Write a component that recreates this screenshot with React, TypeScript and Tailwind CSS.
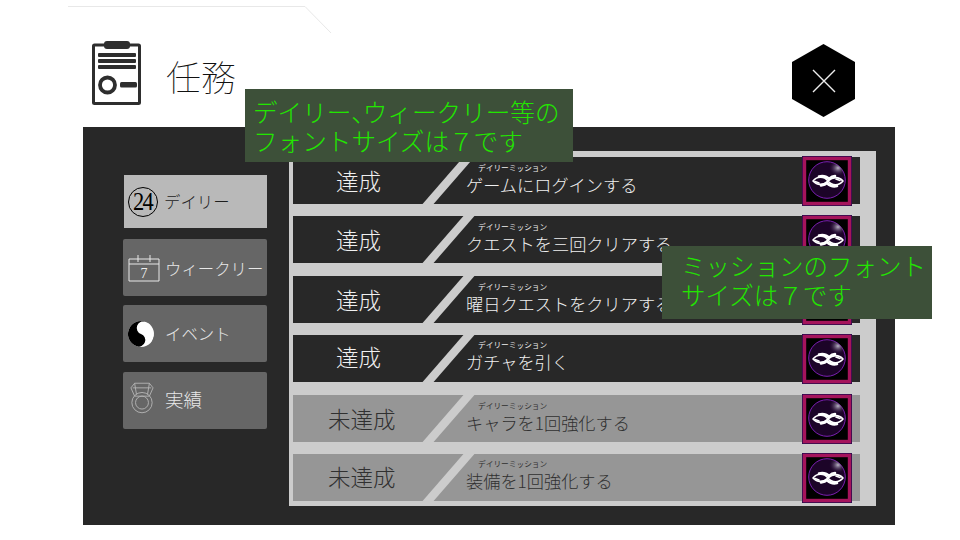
const F = "font-['Noto_Sans_CJK_JP','Noto_Sans_CJK_SC',sans-serif] font-light";

function Gem() {
  return (
    <svg viewBox="0 0 50 50" className="h-[50px] w-[50px] shrink-0">
      <defs>
        <radialGradient id="gemHi" cx="0.5" cy="0.5" r="0.5">
          <stop offset="0" stopColor="#b9b4c4" />
          <stop offset="1" stopColor="#2a0a3c" stopOpacity="0" />
        </radialGradient>
        <clipPath id="gemClip">
          <circle cx="25" cy="24" r="18.3" />
        </clipPath>
      </defs>
      <rect x="0" y="0" width="50" height="50" fill="#2d0a4e" />
      <rect x="2.5" y="2.5" width="45" height="45" fill="#000" stroke="#a5145c" strokeWidth="3.4" />
      <circle cx="25" cy="24" r="18.3" fill="#1c0428" stroke="#7a1fb0" strokeWidth="1" />
      <g clipPath="url(#gemClip)">
        <ellipse cx="36" cy="12" rx="9" ry="8" fill="url(#gemHi)" />
      </g>
      <g fill="none" stroke="#fff" strokeLinecap="round" strokeLinejoin="round">
        <path d="M26 25C22 20 15 20 11 25C15 29.5 21 29.5 26 25C31 20.5 37 20.5 41 25C37 30 30 30 26 25" strokeWidth="1.6" />
        <path d="M17 20.5C21 19.5 24 20 27 23C29 21 31 20 33 20" strokeWidth="2.6" />
        <path d="M19 29.5C22 29 24 28 25 27C28 30 31 31 35 30" strokeWidth="2.6" />
        <path d="M13 25.5L17 27M38 24.5L34 23" strokeWidth="1.6" />
      </g>
    </svg>
  );
}

function MissionRow({ status, title, done, shiftA, shiftB }: { status: string; title: string; done: boolean; shiftA: string; shiftB: string }) {
  return (
    <div className={`relative flex h-[47px] items-center ${done ? "bg-[#282828] text-[#f0f0f0]" : "bg-[#969696] text-[#303030]"}`}>
      <div className={`w-[173px] shrink-0 text-[22.5px] leading-none ${shiftA} ${done ? "pl-[43px]" : "pl-[35px]"}`}>{status}</div>
      <div className="absolute left-[150px] top-0 h-[47px] w-[11px] -skew-x-[41deg] bg-[#cccccc]" />
      <div className={`flex flex-col ${shiftB}`}>
        <span className="ml-[12px] text-[7.7px] font-normal leading-[10px]">デイリーミッション</span>
        <span className="mt-px text-[17.2px] leading-[22px] whitespace-nowrap">{title}</span>
      </div>
      <div className="absolute -top-px right-[8px]">
        <Gem />
      </div>
    </div>
  );
}

function SideButton({ icon, label, active, size, extra }: { icon: React.ReactNode; label: string; active?: boolean; size?: string; extra?: string }) {
  return (
    <div className={`flex items-center ${extra ?? ""} ${active ? "ml-px h-[53px] bg-[#b9b9b9] text-[#1e1e1e]" : "h-[57px] rounded-[2px] bg-[#666666] text-[#e8e8e8]"}`}>
      <div className={`flex shrink-0 justify-start ${active ? "w-[40px] pl-[4px]" : "w-[42px] pl-[5px]"}`}>{icon}</div>
      <span className={`${size ?? "text-[16.4px]"} leading-none whitespace-nowrap`}>{label}</span>
    </div>
  );
}

const rows = [
  ["達成", "ゲームにログインする", true, "", "-mt-[2px]"],
  ["達成", "クエストを三回クリアする", true, "-mt-[2px]", "-mt-[2px]"],
  ["達成", "曜日クエストをクリアする", true, "", "-mt-[2px]"],
  ["達成", "ガチャを引く", true, "-mt-[4px]", "-mt-[4px]"],
  ["未達成", "キャラを1回強化する", false, "", "-mt-[2px]"],
  ["未達成", "装備を1回強化する", false, "-mt-[2px]", "-mt-[4px]"],
] as const;

function Note({ className, lines }: { className: string; lines: React.ReactNode[] }) {
  return (
    <div className={`absolute z-10 bg-[#3d5039] text-[#22e600] ${className}`}>
      {lines.map((l, i) => (
        <div key={i} className="whitespace-nowrap">{l}</div>
      ))}
    </div>
  );
}

export default function App() {
  return (
    <div className={`relative h-[540px] w-[960px] overflow-hidden bg-white ${F}`}>
      <svg className="absolute left-[68px] top-[5px] h-[30px] w-[264px]" viewBox="0 0 264 30">
        <path d="M0 1.5H237L263 28" fill="none" stroke="#e8e8e8" strokeWidth="1" />
      </svg>

      <div className="flex h-[127px] items-start pl-[92px] pr-[105px] pt-[41px]">
        <svg viewBox="0 0 49 64" className="h-[64px] w-[49px]">
          <rect x="1.5" y="4" width="46" height="58.5" rx="1" fill="none" stroke="#2e2e2e" strokeWidth="3" />
          <rect x="12" y="0" width="26" height="8" rx="3" fill="#2e2e2e" />
          <g fill="#2e2e2e">
            <rect x="6" y="12" width="38" height="4" rx="1" />
            <rect x="6" y="18" width="38" height="4" rx="1" />
            <rect x="6" y="24" width="38" height="4" rx="1" />
            <rect x="28" y="41" width="17" height="5.5" rx="1.5" />
          </g>
          <circle cx="15.5" cy="44" r="7.5" fill="none" stroke="#2e2e2e" strokeWidth="3.8" />
        </svg>
        <h1 className="ml-[25px] mt-[17px] text-[35px] font-thin leading-none text-[#111]">任務</h1>
        <svg viewBox="0 0 63 73" className="ml-auto mt-[3px] h-[73px] w-[63px]">
          <path d="M31.5 0L63 18V55L31.5 73L0 55V18Z" fill="#000" />
          <path d="M21 26L43 48M43 26L21 48" stroke="#eee" strokeWidth="1.4" />
        </svg>
      </div>

      <div className="mx-[83px] flex h-[398px] w-[812px] bg-[#282828] pt-[24px]">
        <div className="ml-[40px] mt-[24px] flex w-[144px] shrink-0 flex-col gap-[10px]">
          <SideButton
            active
            label="デイリー"
            icon={
              <span className="flex h-[30px] w-[30px] items-center justify-center rounded-full border border-black font-['Liberation_Serif',serif] text-[25px] tracking-[-2px] text-black">
                <span className="inline-block -translate-x-px scale-x-90">24</span>
              </span>
            }
          />
          <SideButton
            extra="mt-px -mb-px"
            label="ウィークリー"
            size="text-[16.4px] mt-[2px]"
            icon={
              <svg viewBox="0 0 32 28" className="h-[28px] w-[32px]">
                <path d="M1 5H31V27H1ZM1 10H31M10 1V8M22 1V8" fill="none" stroke="#e8e8e8" strokeWidth="1" />
                <text x="16" y="24" textAnchor="middle" fontSize="14" fill="#eee" fontFamily="Liberation Serif">7</text>
              </svg>
            }
          />
          <SideButton
            label="イベント"
            icon={
              <svg viewBox="0 0 28 28" className="h-[26px] w-[26px] rotate-[20deg]">
                <circle cx="14" cy="14" r="14" fill="#fff" />
                <path d="M14 0A14 14 0 0 0 14 28A7 7 0 0 0 14 14A7 7 0 0 1 14 0Z" fill="#000" />
                <circle cx="14" cy="7" r="2" fill="#fff" />
                <circle cx="14" cy="21" r="2" fill="#000" />
              </svg>
            }
          />
          <SideButton
            label="実績"
            size="text-[18.5px] -mt-[2px]"
            icon={
              <svg viewBox="0 0 26 34" className="-mt-[6px] ml-[2px] h-[34px] w-[24px]" fill="none" stroke="#b4b4b4" strokeWidth="1">
                <path d="M5 1H21L25 6L21 15H5L1 6Z" />
                <path d="M5 1L7 13M21 1L19 13M3 6H23" />
                <circle cx="13" cy="22" r="11" />
                <circle cx="13" cy="22" r="7" />
              </svg>
            }
          />
        </div>
        <div className="ml-[22px] flex h-[355px] w-[587px] flex-col justify-between bg-[#cccccc] pb-[5px] pl-[4px] pr-[16px] pt-[6px]">
          {rows.map(([s, t, d, a, b]) => (
            <MissionRow key={t} status={s} title={t} done={d} shiftA={a} shiftB={b} />
          ))}
        </div>
      </div>

      <Note
        className="left-[245px] top-[89px] h-[73px] w-[328px] pl-[8px] pt-[8px] text-[24.6px] leading-[29px]"
        lines={[
          <>
            デイリー<span className="-mr-[13px]">、</span>ウィークリー等の
          </>,
          "フォントサイズは７です",
        ]}
      />
      <Note
        className="left-[662px] top-[246px] h-[73px] w-[270px] pl-[19px] pt-[5px] text-[24.5px] leading-[29px]"
        lines={["ミッションのフォント", "サイズは７です"]}
      />
    </div>
  );
}
